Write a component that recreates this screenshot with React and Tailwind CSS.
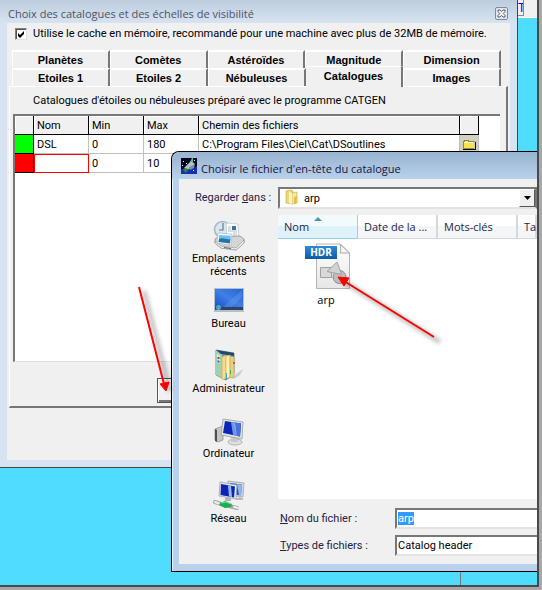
import { useEffect, useRef, useState } from "react";

const TABS = [
  ["Planètes", "Comètes", "Astéroïdes", "Magnitude", "Dimension"],
  ["Etoiles 1", "Etoiles 2", "Nébuleuses", "Catalogues", "Images"],
];

const CATALOGUES = [
  { color: "bg-[#00ff00]", nom: "DSL", min: "0", max: "180", chemin: "C:\\Program Files\\Ciel\\Cat\\DSoutlines" },
  { color: "bg-[#ff0000]", nom: "", min: "0", max: "10", chemin: "" },
];

function CloseIcon() {
  return (
    <svg viewBox="0 0 9 9" className="h-[9px] w-[9px]">
      <path d="M1 1h2l1.5 1.7L6 1h2v1.5L6.2 4.5 8 6.5V8H6L4.5 6.3 3 8H1V6.5l1.8-2L1 2.5z" fill="#fff" stroke="#4b4558" strokeWidth=".9" />
    </svg>
  );
}

function OpenIcon() {
  return (
    <svg viewBox="0 0 14 11" className="h-[11px] w-[14px]" shapeRendering="crispEdges">
      <path d="M1 3h1V2h4v1h6v6H1z" fill="#f5e64e" />
      <path d="M1 3V2h1V1h4v1h6v1M1 3v6h11" fill="none" stroke="#8a8a4a" />
      <path d="M2 3h9v1H2z" fill="#fffbd0" />
      <path d="M1 10h12V3" fill="none" stroke="#111" />
    </svg>
  );
}

function TelescopeIcon() {
  return (
    <svg viewBox="0 0 16 16" className="h-4 w-4 shrink-0">
      <rect width="16" height="16" fill="#04041c" />
      <path d="M0 12c3-3 4 0 7-2s5 1 9-2v8H0z" fill="#1a2fae" />
      <path d="M2 12l4-4 2 3-3 4z" fill="#24883c" />
      <path d="M3 10l7-7 4 3-6 5z" fill="#b4c3c8" />
      <path d="M9 4l2-4h1v4z" fill="#3fc7b1" />
      <path d="M8 9l6-3-1 4-4 2z" fill="#8091a5" />
      <path d="M2 3h1v1H2zM5 5h1v1H5zM13 2h1v1h-1zM1 7h1v1H1zM12 12h1v1h-1z" fill="#e6ecff" />
    </svg>
  );
}

function FolderIcon() {
  return (
    <svg viewBox="0 0 16 16" className="h-4 w-4 shrink-0">
      <path d="M2 2l5-1 2 1v13l-7-1z" fill="#f1d778" stroke="#c9a640" strokeWidth=".6" />
      <path d="M8 4l5-1v11l-5 1z" fill="#f8e8a0" stroke="#c9a640" strokeWidth=".6" />
      <path d="M5 3l3 1v11l-3-1z" fill="#fdf3c0" />
      <path d="M10 8l3-1v7l-3 1z" fill="#e4bf4a" />
    </svg>
  );
}

function RecentIcon() {
  return (
    <svg viewBox="0 0 32 32" className="h-8 w-8">
      <circle cx="9.5" cy="10.5" r="8" fill="#dbe7ee" stroke="#a9b8c2" strokeWidth="1.6" />
      <path d="M10 4v7h-4" fill="none" stroke="#5d7c92" strokeWidth="1.2" />
      <path d="M13 4l12 1 1 17-12-1z" fill="#fff" stroke="#b9c2c8" strokeWidth=".7" />
      <path d="M19 7h4v4h-4z" fill="#3f6f9c" />
      <path d="M15 8h3M15 10h3M15 12h9M20 14h4M20 16h4" stroke="#9fb0bb" strokeWidth=".8" />
      <path d="M2 20l3-2 22-1 4 3v4l-8 7-15-2-6-5z" fill="#d4d6d5" stroke="#8c9290" strokeWidth=".8" />
      <path d="M5 14l14 1-1 11-14-2z" fill="#fafdff" stroke="#a8b6bd" strokeWidth=".7" />
      <path d="M6 16l12 .8-.6 4L6 20z" fill="#6cc1f4" />
      <path d="M6 20c4-2 7 1 11.400 0l-.4 4.500L5.500 23z" fill="#2474a4" />
      <path d="M2 22l6 5 15 2 8-8v3l-8 7-15-2-6-5z" fill="#f2f3f2" stroke="#8c9290" strokeWidth=".6" />
      <path d="M11 28l7 1v1l-7-1z" fill="#626a6a" />
    </svg>
  );
}

function DesktopIcon() {
  return (
    <svg viewBox="0 0 32 32" className="h-8 w-8">
      <defs>
        <linearGradient id="desk" x1="0" y1="1" x2="1" y2="0">
          <stop offset="0" stopColor="#1650c4" />
          <stop offset=".5" stopColor="#3f7fe6" />
          <stop offset="1" stopColor="#2862d2" />
        </linearGradient>
      </defs>
      <rect x="1" y="4" width="30" height="24" fill="#b4bfcd" />
      <rect x="2" y="5" width="28" height="19" fill="url(#desk)" />
      <path d="M10 23L29 6v7L19 23z" fill="#77a9f0" opacity=".3" />
      <rect x="2" y="23" width="28" height="3" fill="#34435c" />
      <circle cx="5.500" cy="23.500" r="2.600" fill="#2e9ed8" />
      <path d="M4 23h1.500v-2zM6 23v-2l1.500 2z" fill="#f1933b" />
      <path d="M4 24h2v2z" fill="#6cd16c" />
    </svg>
  );
}

function UserIcon() {
  return (
    <svg viewBox="0 0 32 32" className="h-8 w-8">
      <path d="M18 29l12-9-3 6-6 4z" fill="#aaa" opacity=".5" />
      <path d="M3 1l18 3v21l-8 6-10-5z" fill="#6ea49c" stroke="#44716f" strokeWidth=".7" />
      <path d="M3 1l6 4v24l-6-3z" fill="#9fd0b4" />
      <path d="M3 1l18 3v3L8 5z" fill="#27466e" />
      <path d="M4 5l3 2v8l-3-2z" fill="#e8eef0" />
      <circle cx="5.500" cy="9" r="1.200" fill="#8e5138" />
      <path d="M4.500 11l2 1v2l-2-1z" fill="#35589a" />
      <path d="M9 8l4-2v23l-3 2-1-1z" fill="#f3dc85" stroke="#c5a34d" strokeWidth=".5" />
      <path d="M13 7l4-1v22l-4 2z" fill="#fff0b5" stroke="#c5a34d" strokeWidth=".5" />
      <path d="M17 7l4 1v20l-4 1z" fill="#ecd079" stroke="#b99a45" strokeWidth=".5" />
      <path d="M13 24h1v6h-1z" fill="#4aa3c7" />
      <path d="M17 21h1v4h-1z" fill="#39b34a" />
      <path d="M20 13h2v2h-2z" fill="#dd5130" />
    </svg>
  );
}

function ComputerIcon() {
  return (
    <svg viewBox="0 0 32 32" className="h-8 w-8">
      <path d="M2 15l8-3v14l-5 2-3-2z" fill="#c6c7c5" stroke="#858786" strokeWidth=".7" />
      <path d="M2 15l2 1v12l-2-1z" fill="#4b5151" />
      <ellipse cx="22" cy="28" rx="7" ry="3" fill="#dfe1e0" stroke="#a4a7a6" strokeWidth=".8" />
      <path d="M18 23h7v5h-7z" fill="#c5c9c9" />
      <path d="M10 5l20 3-1 17-21-4z" fill="#e3e5e5" stroke="#979d9f" strokeWidth=".8" />
      <path d="M12 7l16 2.500-1 13L10 19z" fill="#0c26b4" />
      <path d="M20 8.300l8 1.200-1 13-3-.6z" fill="#4472e0" />
      <path d="M18 8l4 .6 2 13.300-4-.8z" fill="#9cc2f8" opacity=".7" />
    </svg>
  );
}

function NetworkIcon() {
  return (
    <svg viewBox="0 0 32 32" className="h-8 w-8">
      <path d="M15 2l16 2-1 14-15-2z" fill="#d5dbdf" stroke="#939ca5" strokeWidth=".7" />
      <path d="M17 4l12 1.500-1 11L17 15z" fill="#2a50cb" />
      <path d="M24 5l5 .5-1 11-2-.3z" fill="#8db7f3" />
      <path d="M23 20h7M27 17v3" stroke="#b8bebe" strokeWidth="2" />
      <path d="M7 3l17 3-1 14L6 17z" fill="#e3e7e8" stroke="#939ca5" strokeWidth=".7" />
      <path d="M8 5l14 2.500-1 11L7.500 16z" fill="#0d24b0" />
      <path d="M15 6.200l3 .6 1 11.300-3-.5z" fill="#91b9f5" />
      <path d="M12 19h6v3h-6z" fill="#b2b8b7" />
      <path d="M2 23l6 2 16 4" fill="none" stroke="#a2aaa8" strokeWidth="4" strokeLinecap="round" />
      <path d="M2 23l5 2M21 28l4 1" stroke="#edf0ef" strokeWidth="2" strokeLinecap="round" />
      <path d="M7 24l5-2 7 3-1 3-6 1-6-3z" fill="#1cae4e" />
      <path d="M8 24l5-1 5 2" fill="none" stroke="#76e49a" />
    </svg>
  );
}

function HdrFileIcon() {
  return (
    <svg viewBox="0 0 46 48" className="h-12 w-[46px]">
      <defs>
        <linearGradient id="paper" x1="0" y1="0" x2="0" y2="1">
          <stop offset="0" stopColor="#fff" />
          <stop offset="1" stopColor="#e6e6e6" />
        </linearGradient>
        <linearGradient id="badge" x1="0" y1="0" x2="0" y2="1">
          <stop offset="0" stopColor="#2f8bd3" />
          <stop offset="1" stopColor="#0a5ca8" />
        </linearGradient>
      </defs>
      <path d="M11.500 1h24l9 9v35.500h-33z" fill="url(#paper)" stroke="#b4b4b4" />
      <path d="M35 1c1 3 1 6 0 9h9.500z" fill="#f7f7f7" stroke="#a8a8a8" />
      <path d="M15.500 24.500h11v10h-11z" fill="#d8d8d8" stroke="#a0a0a0" />
      <circle cx="34.500" cy="34" r="6.500" fill="#bdbdbd" stroke="#8a8a8a" />
      <path d="M32 19l4.500 12.500L22 28.500z" fill="#d2d2d2" stroke="#a0a0a0" />
      <rect x="0" y="3" width="32" height="13" fill="url(#badge)" />
      <text x="16" y="13" textAnchor="middle" fill="#fff" fontSize="10" fontWeight="700" fontFamily="Open Sans, sans-serif">HDR</text>
    </svg>
  );
}

const PLACES = [
  { label: "Emplacements récents", Icon: RecentIcon },
  { label: "Bureau", Icon: DesktopIcon },
  { label: "Administrateur", Icon: UserIcon },
  { label: "Ordinateur", Icon: ComputerIcon },
  { label: "Réseau", Icon: NetworkIcon },
];

function Tab({ label, active, onClick }) {
  return (
    <button
      type="button"
      role="tab"
      aria-selected={active}
      onClick={onClick}
      className={
        active
          ? "relative z-10 -mt-0.5 -mb-px h-[21px] flex-1 border-t border-r-2 border-t-white border-r-[#777] bg-[#f0f0f0] pb-0.5 font-bold"
          : "h-[18px] flex-1 border-t-2 border-l border-r-2 border-t-white border-l-white border-r-[#777] bg-[#f0f0f0] font-bold"
      }
    >
      {label}
    </button>
  );
}

function CatalogueTable() {
  const head = "h-[19px] border-r border-b border-black bg-[#f0f0f0] px-[3px] text-left font-normal shadow-[inset_1px_1px_0_#fff]";
  const cell = "h-[19px] border-r border-b border-[#c0c0c0] px-[3px] whitespace-nowrap";
  return (
    <table className="w-[464px] table-fixed border-separate border-spacing-0">
      <colgroup>
        <col className="w-[19px]" />
        <col className="w-[55px]" />
        <col className="w-[55px]" />
        <col className="w-[55px]" />
        <col />
        <col className="w-[19px]" />
      </colgroup>
      <thead>
        <tr>
          <th className={head} aria-label="Couleur" />
          <th className={head}>Nom</th>
          <th className={head}>Min</th>
          <th className={head}>Max</th>
          <th className={head}>Chemin des fichiers</th>
          <th className={head} aria-label="Ouvrir" />
        </tr>
      </thead>
      <tbody>
        {CATALOGUES.map((c, i) => (
          <tr key={i}>
            <td className={`h-[19px] border-r border-b border-black ${c.color}`} />
            <td className={c.nom ? cell : "h-[19px] border border-[#ff0000]"}>{c.nom}</td>
            <td className={cell}>{c.min}</td>
            <td className={cell}>{c.max}</td>
            <td className={cell}>{c.chemin}</td>
            <td className="h-[19px] border-r border-b border-[#c0c0c0] bg-[#d4d0c0] p-0">
              <button type="button" aria-label="Parcourir" className="flex h-[18px] w-full items-center justify-center">
                <OpenIcon />
              </button>
            </td>
          </tr>
        ))}
      </tbody>
    </table>
  );
}

function CatalogueWindow() {
  const [tab, setTab] = useState("Catalogues");
  const [cache, setCache] = useState(true);

  return (
    <section className="absolute top-0 right-[19px] left-0 flex h-[468px] flex-col border-r border-b border-[#444] bg-[#d8e3f1] px-[7px] pb-[7px] text-[11px] leading-[13px] text-black">
      <header className="-mx-[7px] flex h-[23px] shrink-0 items-center justify-between bg-linear-to-b from-[#bccddd] to-[#d8e3f1] pr-[9px] pl-2">
        <h1 className="pt-1 font-['Open_Sans',sans-serif] text-[11px] leading-4 whitespace-nowrap text-[#4a5568]">
          Choix des catalogues et des échelles de visibilité
        </h1>
        <button type="button" aria-label="Fermer" className="mt-1 flex h-[13px] w-[13px] items-center justify-center rounded-xs border border-[#7d8ba0] bg-[#dfe8f2]">
          <CloseIcon />
        </button>
      </header>

      <div className="flex flex-1 flex-col bg-[#f0f0f0] px-0.5 pb-[52px]">
        <label className="flex h-[25px] shrink-0 items-center gap-1.5 pb-1 pl-1.5 whitespace-nowrap">
          <span className="relative flex h-3 w-3 shrink-0">
            <input
              type="checkbox"
              checked={cache}
              onChange={(e) => setCache(e.target.checked)}
              className="h-3 w-3 appearance-none border border-t-[#808080] border-r-[#e3e3e3] border-b-[#e3e3e3] border-l-[#808080] bg-white shadow-[inset_1px_1px_0_#555]"
            />
            {cache && (
              <svg viewBox="0 0 12 12" className="pointer-events-none absolute inset-0 h-3 w-3">
                <path d="M3 5v3l2 2 4-4V3L5 7z" fill="#000" />
              </svg>
            )}
          </span>
          Utilise le cache en mémoire, recommandé pour une machine avec plus de 32MB de mémoire.
        </label>

        <div role="tablist" className="mt-0.5 pr-[7px] pl-[3px] font-['Liberation_Sans',Arial,sans-serif]">
          {TABS.map((row, i) => (
            <div key={i} className="flex h-[18px]">
              {row.map((label) => (
                <Tab key={label} label={label} active={label === tab} onClick={() => setTab(label)} />
              ))}
            </div>
          ))}
        </div>

        <div role="tabpanel" className="flex flex-1 flex-col border-t border-r-2 border-b-2 border-l border-t-white border-r-[#777] border-b-[#777] border-l-white pr-[6px] pl-[3px]">
          <p className="py-[7px] pl-5 whitespace-nowrap">
            Catalogues d'étoiles ou nébuleuses préparé avec le programme CATGEN
          </p>
          <div className="h-[248px] border-t-2 border-l-2 border-b border-t-[#777] border-b-[#ddd] border-l-[#777] bg-white">
            <CatalogueTable />
          </div>
          <button
            type="button"
            aria-label="Ajouter"
            className="mt-4 ml-36 h-[25px] w-20 border border-[#555] bg-[#f0f0f0] shadow-[inset_1px_1px_0_#fff,inset_-1px_-2px_0_#777]"
          />
        </div>
      </div>
    </section>
  );
}

function FileList() {
  const head = "h-6 border-r-2 border-b border-[#d5d8dc] bg-linear-to-b from-white from-50% to-[#f3f5f7] to-50% px-1.5 text-left font-normal whitespace-nowrap";
  return (
    <div className="overflow-hidden bg-white font-['Open_Sans',sans-serif]">
      <table className="w-full table-fixed border-separate border-spacing-0 text-[#1e1e4a]">
        <thead>
          <tr>
            <th className="relative h-6 w-20 border-r border-b border-[#96d2ec] bg-linear-to-b from-[#f2fafd] from-50% to-[#dff1fa] to-50% px-1.5 text-left font-normal">
              Nom
              <svg viewBox="0 0 8 4" className="absolute top-0.5 left-9 h-1 w-2">
                <path d="M0 4l4-4 4 4z" fill="#4d94b5" />
              </svg>
            </th>
            <th className={`w-20 ${head}`}>Date de la ...</th>
            <th className={`w-20 ${head}`}>Mots-clés</th>
            <th className={head}>Ta</th>
          </tr>
        </thead>
      </table>
      <button type="button" className="mt-1 ml-[27px] flex flex-col items-center gap-0.5 text-black">
        <HdrFileIcon />
        <span className="pr-1">arp</span>
      </button>
    </div>
  );
}

function OpenDialog() {
  const [fileName, setFileName] = useState("arp");
  const nameRef = useRef(null);

  useEffect(() => {
    nameRef.current?.focus();
    nameRef.current?.select();
  }, []);

  const sunken = "border-2 border-r-0 border-t-[#777] border-b-[#e3e3e3] border-l-[#777] bg-white";

  return (
    <section className="absolute top-[151px] right-0 left-[171px] rounded-tl-lg border border-r-0 border-black bg-[#b9d1ea] pb-[7px] pl-[7px] text-[11px] leading-[13px] text-black shadow-[inset_1px_1px_0_#e8f4fc]">
      <header className="-ml-[7px] flex h-[27px] items-center gap-1 rounded-tl-lg bg-linear-to-b from-[#98b3d0] to-[#b9d1ea] pl-[9px]">
        <TelescopeIcon />
        <h2 className="pt-1.5 font-['Open_Sans',sans-serif] text-[11px] leading-4 whitespace-nowrap text-[#14143c]">Choisir le fichier d'en-tête du catalogue</h2>
      </header>

      <form onSubmit={(e) => e.preventDefault()} className="grid grid-cols-[99px_1fr] bg-[#f0f0f0] pt-2 pb-2">
        <label htmlFor="dossier" className="pt-1 pl-4 whitespace-nowrap text-[#222244]">
          Regarder <u>d</u>ans :
        </label>
        <div className="relative flex h-[22px]">
          <select id="dossier" className="w-full appearance-none border-2 border-t-[#777] border-r-[#777] border-b-[#e3e3e3] border-l-[#777] bg-white pl-6">
            <option>arp</option>
          </select>
          <span className="pointer-events-none absolute top-0.5 left-1.5">
            <FolderIcon />
          </span>
          <span className="pointer-events-none absolute top-0.5 right-0.5 flex h-[18px] w-4 items-center justify-center border border-t-white border-r-[#555] border-b-[#555] border-l-white bg-[#f0f0f0]">
            <svg viewBox="0 0 7 4" className="h-1 w-[7px]">
              <path d="M0 0h7L3.5 4z" fill="#000" />
            </svg>
          </span>
        </div>

        <nav className="pt-2.5">
          {PLACES.map(({ label, Icon }) => (
            <button key={label} type="button" className="flex h-[65px] w-full flex-col items-center gap-px px-2">
              <Icon />
              {label}
            </button>
          ))}
        </nav>

        <div className="flex min-w-0 flex-col pt-1.5">
          <div className="grid h-[284px] overflow-hidden">
            <FileList />
          </div>
          <div className="mt-[9px] grid grid-cols-[117px_1fr] items-center gap-y-1.5 text-[#222244]">
            <label htmlFor="nom" className="pl-0.5"><u>N</u>om du fichier :</label>
            <input
              id="nom"
              ref={nameRef}
              value={fileName}
              onChange={(e) => setFileName(e.target.value)}
              className={`${sunken} h-[21px] w-full min-w-0 px-px outline-none selection:bg-[#3399ff] selection:text-white`}
            />
            <label htmlFor="type" className="pl-0.5"><u>T</u>ypes de fichiers :</label>
            <select id="type" className={`${sunken} h-[21px] w-full min-w-0 appearance-none px-px text-black`}>
              <option>Catalog header</option>
            </select>
          </div>
        </div>
      </form>
    </section>
  );
}

// Red pointers drawn over both windows
function Arrows() {
  return (
    <svg className="pointer-events-none absolute inset-0 h-full w-full">
      <defs>
        <filter id="soft" x="-20%" y="-20%" width="140%" height="140%">
          <feGaussianBlur stdDeviation="2" />
        </filter>
      </defs>
      <g stroke="#000" strokeWidth="4" opacity=".28" filter="url(#soft)">
        <path d="M144 291l26 100M440 342l-97-61" />
      </g>
      <g stroke="#f00" strokeWidth="2" fill="#f00">
        <path d="M139 287l25 97M434 337l-90-56" />
        <path d="M160 384l9-2-3 9zM338 277l11 1-5 8z" strokeWidth="1" />
      </g>
    </svg>
  );
}

export default function App() {
  return (
    <main className="h-screen overflow-hidden bg-[#a8a8a8] pr-[3px] pb-[3px] font-[Roboto,'Liberation_Sans',sans-serif]">
      <div className="relative h-full overflow-hidden border-r-2 border-b-2 border-[#4a4a4a] bg-[#50dcff]">
        <div className="ml-auto flex h-[18px] w-[19px] items-start border-b border-white bg-[#f0f0f0]">
          <span className="h-4 w-1.5 overflow-hidden border-r border-b border-[#888] text-xs leading-4 text-[#0000ff]">T</span>
        </div>
        <div className="absolute right-[76px] bottom-0 h-4 w-px bg-[#777]" />
        <CatalogueWindow />
        <OpenDialog />
        <Arrows />
      </div>
    </main>
  );
}
